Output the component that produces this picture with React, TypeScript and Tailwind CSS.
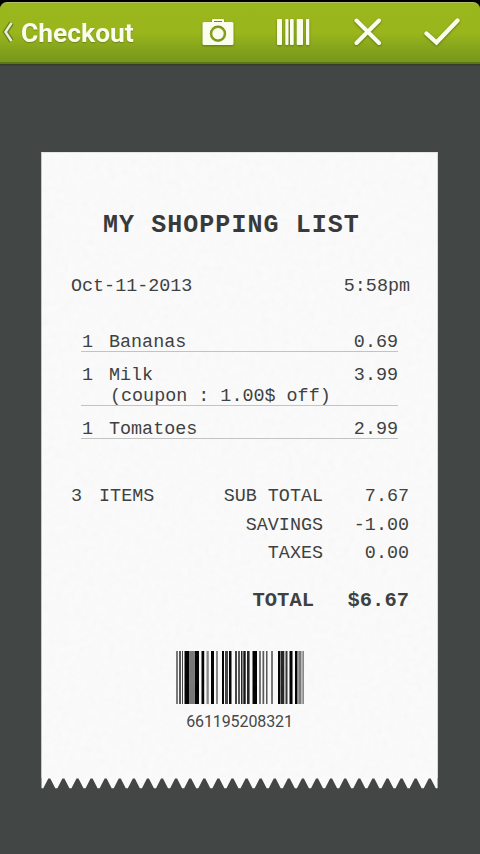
/* ------------------------------------------------------------------ */
/*  Checkout screen: action bar on top, paper receipt below.           */
/* ------------------------------------------------------------------ */

const MONO = "font-['Liberation_Mono',monospace]";

type Item = { qty: number; name: string; price: string; note?: string };

const items: Item[] = [
  { qty: 1, name: "Bananas", price: "0.69" },
  { qty: 1, name: "Milk", price: "3.99", note: "(coupon : 1.00$ off)" },
  { qty: 1, name: "Tomatoes", price: "2.99" },
];

// [x, width, colour] of each bar
const bars: [number, number, string][] = [
  [0, 2, "#777"], [3, 2, "#555"], [6, 1, "#444"], [8.5, 5, "#000"],
  [14, 4, "#777"], [18.5, 4.5, "#000"], [25.5, 2.7, "#000"], [30.5, 2.3, "#888"],
  [35, 3, "#000"], [40, 2, "#888"], [46, 2, "#000"], [49, 3, "#444"],
  [53, 2.5, "#000"], [59, 2, "#444"], [62, 2, "#555"], [65, 1.5, "#222"],
  [67.3, 2.4, "#111"], [71, 2.6, "#222"], [76.5, 4.5, "#000"], [83, 2, "#777"],
  [86.5, 1.7, "#555"], [90, 1.5, "#555"], [95, 2, "#777"], [102, 2.5, "#000"],
  [105, 3.3, "#222"], [109.5, 2, "#333"], [113.5, 3, "#000"], [119, 2.5, "#000"],
  [122.3, 3.2, "#777"], [126.3, 1.7, "#888"],
];

const TEETH = 28;
const PITCH = 14.09;

function CameraIcon() {
  return (
    <svg width="32" height="28" viewBox="0 0 32 28">
      <path
        fill="#fbfdec"
        fillRule="evenodd"
        d="M10 4V2q0-1 1-1h10q1 0 1 1v2h8q1.500 0 1.500 1.500V25.500q0 1.500-1.500 1.500H2q-1.500 0-1.500-1.500V5.500Q.5 4 2 4zM12 3v1h8V3zM16 7.500a8.200 8.200 0 1 0 0 16.400a8.200 8.200 0 1 0 0-16.400z"
      />
      <circle cx="16" cy="15.700" r="5.700" fill="#fbfdec" />
    </svg>
  );
}

function BarsIcon() {
  return (
    <svg width="33" height="28" viewBox="0 0 33 28" fill="#fbfdec">
      <rect x="0" y="1" width="5" height="26" rx=".8" />
      <rect x="8.300" y="1" width="3.200" height="26" rx=".8" />
      <rect x="13" y="1" width="3.700" height="26" rx=".8" />
      <rect x="19.700" y="1" width="6.300" height="26" rx=".8" />
      <rect x="29" y="1" width="3.300" height="26" rx=".8" />
    </svg>
  );
}

function CloseIcon() {
  return (
    <svg width="28" height="28" viewBox="0 0 28 28">
      <path d="M2.500 2.500L25 25M25 2.500L2.500 25" stroke="#fbfdec" strokeWidth="4" strokeLinecap="round" />
    </svg>
  );
}

function CheckIcon() {
  return (
    <svg width="36" height="28" viewBox="0 0 36 28">
      <path d="M2.500 15.500L12.500 24.500L33.500 2.500" fill="none" stroke="#fbfdec" strokeWidth="4.300" strokeLinecap="round" />
    </svg>
  );
}

function ActionBar() {
  return (
    <div className="h-16 shrink-0 bg-black pt-[2px]">
      <header className="flex h-[62px] items-center rounded-t-[7px] border-t border-b-2 border-t-[#b3bf66] border-b-[#597619] bg-linear-to-b from-[#9bb61e] via-[#99b61d] to-[#76961a] font-[Roboto,sans-serif] shadow-[0_1px_2px_#30371f]">
        <svg width="12" height="24" viewBox="0 0 12 24" className="mb-[2px] ml-[2px]">
          <path d="M9.500 3L3.500 12L9.500 21" fill="none" stroke="#657d22" strokeWidth="5" />
          <path d="M9.500 3L3.500 12L9.500 21" fill="none" stroke="#e8efd0" strokeWidth="2.500" />
        </svg>
        <h1 className="ml-[7px] w-[181px] text-[26px] leading-none font-bold text-[#fbfdec] [text-shadow:0_1px_1px_#70851f]">
          <span className="inline-block origin-left scale-x-[1.015]">Checkout</span>
        </h1>
        <div className="mb-[2px] flex items-center drop-shadow-[0_1px_1px_#5d7614]">
          <CameraIcon />
          <div className="ml-[43px]"><BarsIcon /></div>
          <div className="ml-[44px]"><CloseIcon /></div>
          <div className="ml-[42px]"><CheckIcon /></div>
        </div>
      </header>
    </div>
  );
}

function ItemRow({ item }: { item: Item }) {
  return (
    <li className="border-b border-[#c2c4c3] pt-[13px] pl-px leading-[21px]">
      <div className="-mb-[2px]">
        <div className="flex">
          <span className="w-[27px]">{item.qty}</span>
          <span className="flex-1">{item.name}</span>
          <span>{item.price}</span>
        </div>
        {item.note && <div className="pl-[28px]">{item.note}</div>}
      </div>
    </li>
  );
}

function SummaryRow({ label, value }: { label: string; value: string }) {
  return (
    <div className="flex justify-end">
      <span>{label}</span>
      <span className="w-[86px] text-right">{value}</span>
    </div>
  );
}

function Barcode() {
  return (
    <div className="mt-[36px] flex flex-col items-center">
      <svg width="128" height="53" viewBox="0 0 128 53">
        {bars.map(([x, w, fill]) => (
          <rect key={x} x={x} width={w} height="53" fill={fill} />
        ))}
      </svg>
      <span className="mt-[8px] font-[Roboto,sans-serif] text-[16px] leading-5 tracking-[-0.1px] text-[#444]">
        661195208321
      </span>
    </div>
  );
}

function PaperGrain() {
  return (
    <svg className="pointer-events-none absolute inset-0 h-full w-full opacity-[0.05]">
      <filter id="grain">
        <feTurbulence type="fractalNoise" baseFrequency="0.15" numOctaves="3" />
        <feColorMatrix type="saturate" values="0" />
      </filter>
      <rect width="100%" height="100%" filter="url(#grain)" />
    </svg>
  );
}

function TornEdge() {
  const points = Array.from({ length: TEETH }, (_, i) => {
    const x = 8.3 + i * PITCH;
    return `L${x - 6} 10.300L${x - 1} .5L${x + 1} .5L${x + 6} 10.300`;
  }).join("");
  return (
    <svg width="397" height="11" viewBox="0 0 397 11" className="block">
      <path d={`M.5 0L.5 10.300${points}L396.600 10.300L396.600 0Z`} fill="#fafafa" />
    </svg>
  );
}

function Receipt() {
  return (
    <section className="mt-[88px] ml-[41px] w-[397px]">
      <div className={`relative h-[626px] border-t border-r border-l border-t-[#e3e4e4] border-r-[#d5d8d7] border-l-[#c5c8c7] bg-[#fbfbfb] pt-[57px] text-[18.400px] text-[#3b3e3d] ${MONO}`}>
        <PaperGrain />
        <h2 className="pl-[61px] text-[25px] leading-8 font-bold tracking-[1.050px] whitespace-nowrap text-[#343736]">
          MY SHOPPING LIST
        </h2>

        <div className="mt-[33px] flex justify-between pr-[27px] pl-[29px] leading-6">
          <span>Oct-11-2013</span>
          <span>5:58pm</span>
        </div>

        <ul className="mt-[20px] mr-[39px] ml-[39px]">
          {items.map((item) => (
            <ItemRow key={item.name} item={item} />
          ))}
        </ul>

        <div className="mt-[44px] pr-[28px] pl-[29px] leading-[28px]">
          <div className="flex justify-between">
            <span className="[word-spacing:6px]">3 ITEMS</span>
            <SummaryRow label="SUB TOTAL" value="7.67" />
          </div>
          <div className="mt-px">
            <SummaryRow label="SAVINGS" value="-1.00" />
          </div>
          <SummaryRow label="TAXES" value="0.00" />
          <div className="mt-[19px] flex justify-end text-[20.500px] font-bold">
            <span>TOTAL</span>
            <span className="w-[95px] text-right">$6.67</span>
          </div>
        </div>

        <Barcode />
      </div>
      <TornEdge />
    </section>
  );
}

export default function App() {
  return (
    <main className="flex h-screen w-full flex-col overflow-hidden bg-[#424746]">
      <ActionBar />
      <Receipt />
    </main>
  );
}
